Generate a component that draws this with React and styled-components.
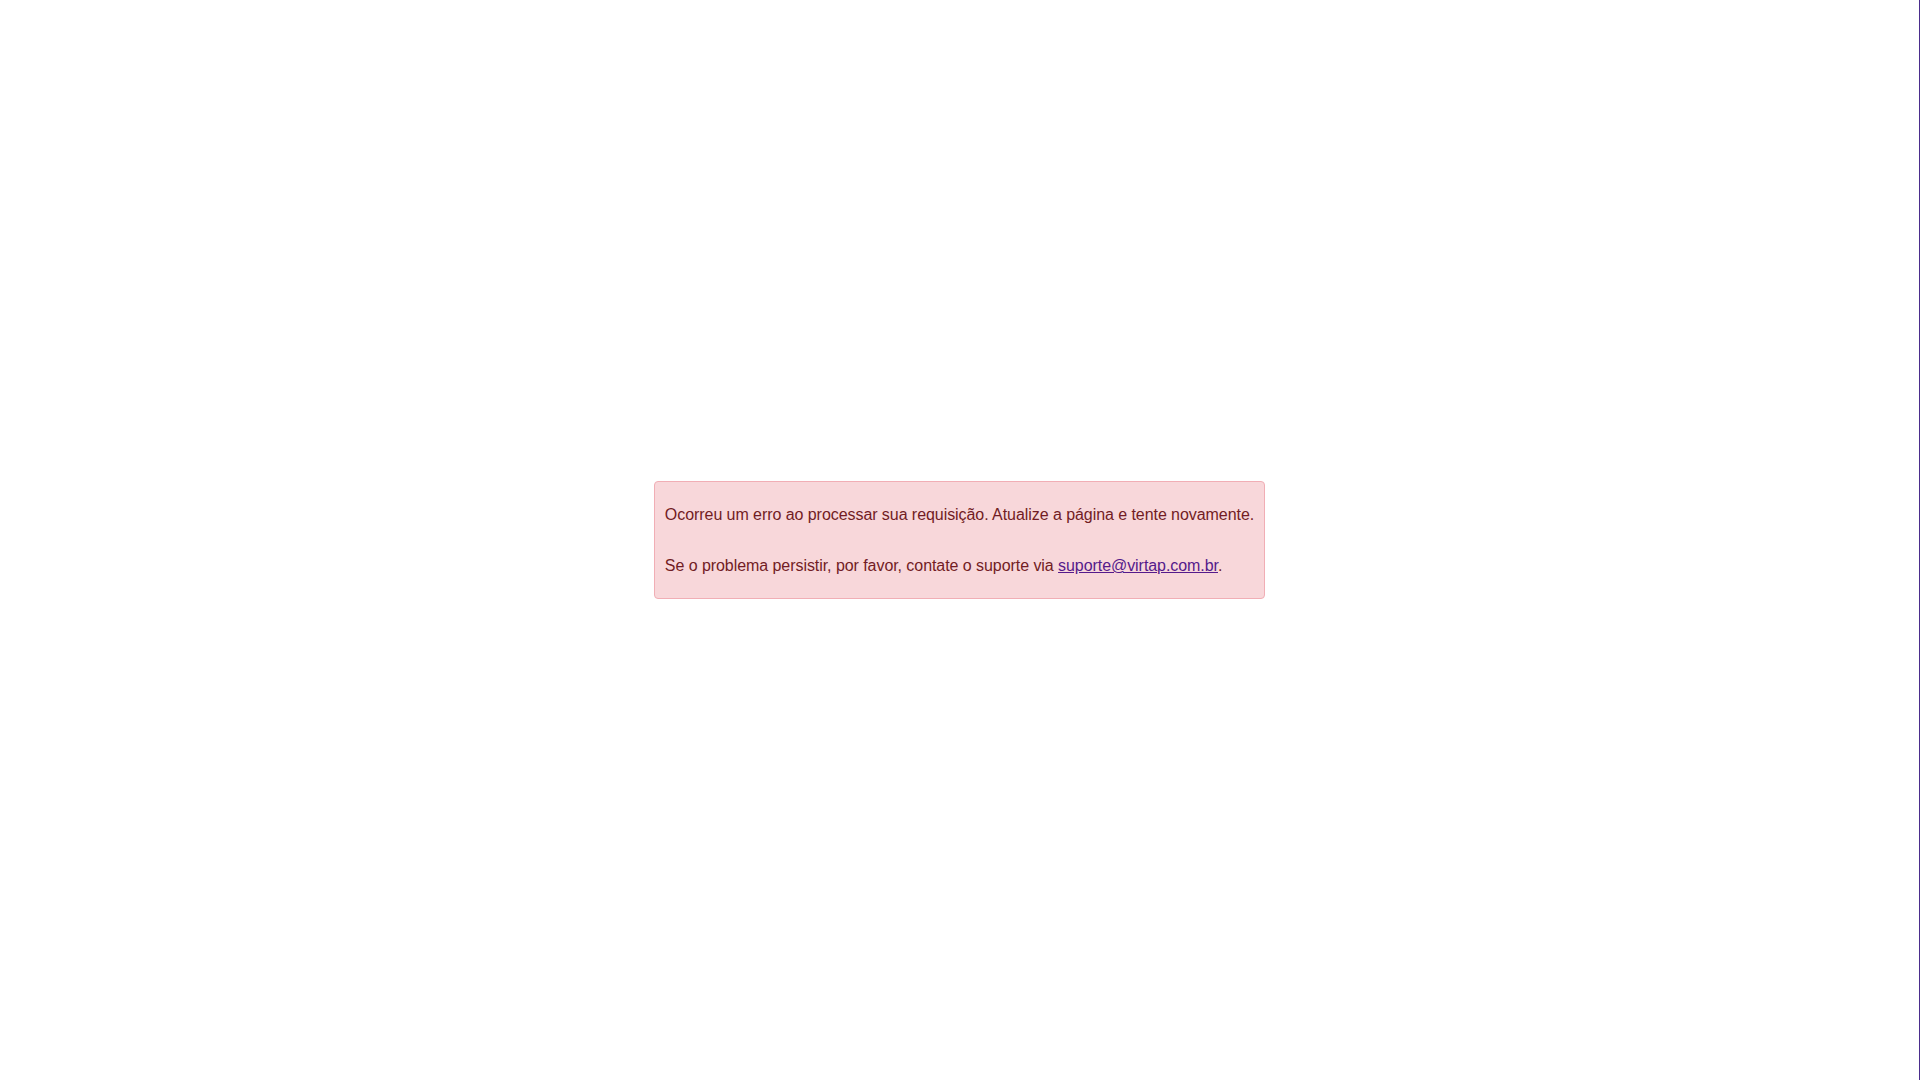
import React from "react";
import styled, { createGlobalStyle } from "styled-components";

const Global = createGlobalStyle`
  html, body { margin: 0; padding: 0; background: #ffffff; }
  body { font-family: "Liberation Sans", Arial, sans-serif; }
`;

const Page = styled.div`
  box-sizing: border-box;
  width: 1920px;
  height: 1080px;
  border-right: 1px solid #4b2d8c;
  display: flex;
  align-items: center;
  justify-content: center;
`;

const Alert = styled.div`
  box-sizing: border-box;
  background: #f8d7da;
  border: 1px solid #f1aeb5;
  border-radius: 4px;
  color: #721c24;
  font-size: 16px;
  letter-spacing: -0.06px;
  line-height: 25.5px;
  padding: 20px 10px 19px;
  white-space: nowrap;
`;

const Link = styled.a`
  color: #551a8b;
  text-decoration: underline;
`;

export default function App() {
  return (
    <>
      <Global />
      <Page>
        <Alert>
          Ocorreu um erro ao processar sua requisição. Atualize a página e tente novamente.
          <br />
          <br />
          Se o problema persistir, por favor, contate o suporte via{" "}
          <Link href="mailto:suporte@virtap.com.br">suporte@virtap.com.br</Link>.
        </Alert>
      </Page>
    </>
  );
}
